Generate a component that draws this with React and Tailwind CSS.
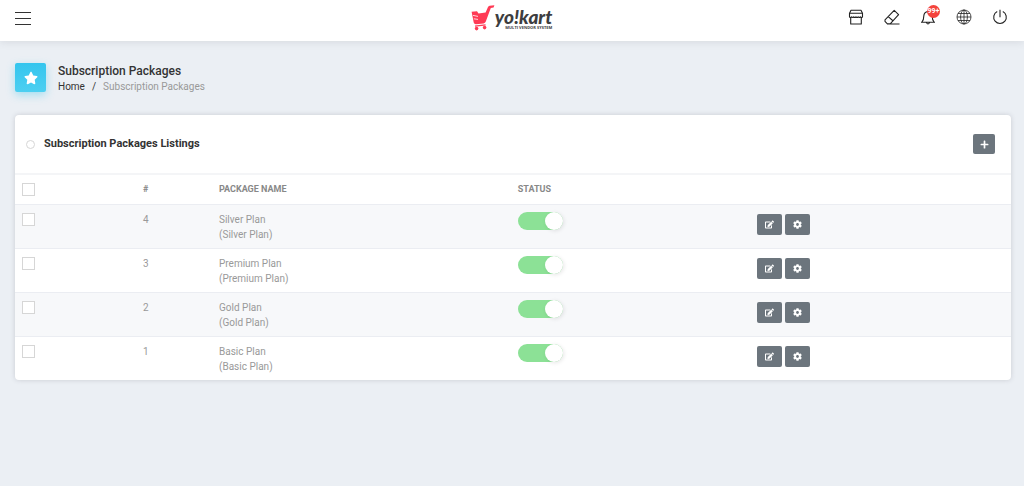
import React, { useState } from 'react';
import { FaCog, FaEdit, FaPlus, FaStar } from 'react-icons/fa';

const packages = [
  { id: 4, name: 'Silver Plan', active: true },
  { id: 3, name: 'Premium Plan', active: true },
  { id: 2, name: 'Gold Plan', active: true },
  { id: 1, name: 'Basic Plan', active: true },
];

const Icon = ({ children }) => (
  <svg viewBox="0 0 16 16" className="size-4" fill="none" stroke="currentColor" strokeWidth="1.1" strokeLinejoin="round">
    {children}
  </svg>
);

const Logo = () => (
  <a href="#" aria-label="yo!kart" className="flex items-start">
    <svg viewBox="0 0 24 26" className="h-[26px] w-6" fill="#ff3a55">
      <path d="M.6 6.8 L6 6.2 L7.5 8.6 L14.6 7.4 L17 2 Q17.5 .9 18.6 .7 L23.4 .2 L22.6 2.6 L19.8 3 L14.8 16.6 Q14.2 18.2 12.6 18.4 L5 19.3 Q3.2 19.4 2.7 17.6 Z" />
      <path d="M4 21.2 L14.6 19.9" stroke="#ff3a55" strokeWidth="1.2" />
      <circle cx="5.6" cy="23.6" r="1.8" />
      <circle cx="13.6" cy="22.6" r="1.8" />
      <path d="M2 10.4 L7 11.4 M2.8 13.8 L7 14.4" stroke="#fff" strokeWidth=".8" />
    </svg>
    <span className="flex flex-col items-end pt-[3px] text-[#3d3d3f]">
      <span className="font-[Lato,sans-serif] text-[19px] leading-[18px] font-black italic">yo!kart</span>
      <span className="font-['Open_Sans',sans-serif] text-[4px] leading-[4px] font-bold">MULTI VENDOR SYSTEM</span>
    </span>
  </a>
);

const TopBar = () => (
  <header className="relative grid grid-cols-3 items-start bg-white pt-[5px] pr-4 pb-[10px] pl-[15px] shadow-[0_1px_8px_rgba(69,65,78,0.12)]">
    <button type="button" aria-label="Menu" className="flex w-4 flex-col gap-[5px] pt-[7px]">
      <span className="h-px w-4 bg-[#333]" />
      <span className="h-px w-4 bg-[#333]" />
      <span className="h-px w-4 bg-[#333]" />
    </button>
    <div className="flex justify-center">
      <Logo />
    </div>
    <div className="flex justify-end gap-5 pt-1 text-[#222]">
      <button type="button" aria-label="Store">
        <Icon>
          <path d="M3 1.2h10l1.5 3v3.6q-1.1 1.4-2.2 0q-1.1 1.4-2.1 0q-1.1 1.4-2.2 0q-1.1 1.4-2.2 0q-1.1 1.4-2.1 0q-1.1 1.4-2.2 0V4.2zM2.7 8.8V15h10.6V8.8M1.5 4.2h13" />
        </Icon>
      </button>
      <button type="button" aria-label="Clear cache">
        <Icon>
          <path d="M1 10.8 10.2 1.3l4.4 4.3-8.4 9.2H3.4L1 12.4zM4.2 7.6l5 4.4M3 15h12.5" />
        </Icon>
      </button>
      <button type="button" aria-label="Notifications" className="relative">
        <Icon>
          <path d="M1 13.2h14M2 13q1.8-2 1.8-6Q4 3 8 2.5Q12 3 12.2 7q0 4 1.8 6M6.4 13.5q1.6 3 3.2 0" />
        </Icon>
        <span className="absolute -top-1 left-[7px] flex size-[13px] items-center justify-center rounded-full bg-[#f4433c] text-[7px] font-bold text-white">99+</span>
      </button>
      <button type="button" aria-label="Language">
        <Icon>
          <g strokeWidth=".8">
            <circle cx="8" cy="8" r="7" />
            <ellipse cx="8" cy="8" rx="3.4" ry="7" />
            <path d="M8 1v14M1 8h14M2 4.5h12M2 11.5h12" />
          </g>
        </Icon>
      </button>
      <button type="button" aria-label="Log out">
        <Icon>
          <path d="M5.2 2.6a6.3 6.3 0 1 0 5.6 0M8 .8v7.4" />
        </Icon>
      </button>
    </div>
  </header>
);

const CheckBox = ({ label }) => (
  <input type="checkbox" aria-label={label} className="block size-[13px] appearance-none border border-[#d6d6d6] bg-white checked:bg-[#8ce196]" />
);

const StatusSwitch = ({ label, defaultChecked }) => {
  const [on, setOn] = useState(defaultChecked);
  return (
    <input
      type="checkbox"
      role="switch"
      aria-label={label}
      checked={on}
      onChange={() => setOn(!on)}
      className="flex h-[18px] w-[45px] appearance-none rounded-full bg-[#d5d9de] before:size-[18px] before:rounded-full before:bg-white before:shadow-[1px_1px_4px_rgba(0,0,0,0.1)] checked:justify-end checked:bg-[#8ce196]"
    />
  );
};

const ActionButton = ({ label, children }) => (
  <button type="button" aria-label={label} className="flex h-[21px] w-[25px] items-center justify-center rounded-xs bg-[#6c757d] text-[9px] text-white">
    {children}
  </button>
);

const App = () => {
  return (
    <div className="min-h-screen bg-[#ebeff4] font-[Roboto,sans-serif]">
      <TopBar />

      <main className="pt-[22px] pr-[13px] pb-6 pl-[15px]">
        <div className="flex items-start gap-3">
          <div className="flex h-[29px] w-[31px] items-center justify-center rounded-xs bg-linear-to-b from-[#33c5ee] to-[#4ccff1] text-[14px] text-white shadow-[0_3px_8px_rgba(54,198,238,0.4)]">
            <FaStar />
          </div>
          <div>
            <h1 className="text-[12px] leading-4 font-medium text-[#333]">Subscription Packages</h1>
            <nav className="flex gap-[7px] text-[10px] leading-4 text-[#999]">
              <a href="#" className="text-[#333]">Home</a>
              <span className="text-[#333]">/</span>
              <span>Subscription Packages</span>
            </nav>
          </div>
        </div>

        <section className="mt-5 overflow-hidden rounded-sm bg-white shadow-[0_0_5px_rgba(69,65,78,0.2)]">
          <div className="flex h-[60px] items-center justify-between border-b-2 border-[#f4f5f7] pr-4 pl-[11px]">
            <div className="flex items-center gap-[9px]">
              <span className="size-[9px] rounded-full border border-[#d6d6d6]" />
              <h2 className="text-[11px] font-bold text-[#333]">Subscription Packages Listings</h2>
            </div>
            <button type="button" aria-label="Add package" className="flex h-5 w-[22px] items-center justify-center rounded-xs bg-[#6c757d] text-[9px] text-white">
              <FaPlus />
            </button>
          </div>

          <table className="w-full table-fixed text-left text-[10px] text-[#999]">
            <thead>
              <tr className="h-[29px] text-[9px] text-[#888]">
                <th className="w-[121px] px-[7px]"><CheckBox label="Select all" /></th>
                <th className="w-[76px] px-[7px] font-bold">#</th>
                <th className="w-[30%] px-[7px] font-bold">PACKAGE NAME</th>
                <th className="w-[24%] px-[7px] font-bold">STATUS</th>
                <td className="px-[7px]" />
              </tr>
            </thead>
            <tbody>
              {packages.map((pkg) => (
                <tr key={pkg.id} className="border-t border-[#ebedf2] align-top odd:bg-[#f7f8fa]">
                  <td className="px-[7px] pt-2"><CheckBox label={`Select ${pkg.name}`} /></td>
                  <td className="px-[7px] pt-[7px] leading-[15px]">{pkg.id}</td>
                  <td className="px-[7px] pt-[7px] pb-[6px] leading-[15px]">
                    {pkg.name}
                    <br />
                    ({pkg.name})
                  </td>
                  <td className="px-[7px] pt-[7px]"><StatusSwitch label={`${pkg.name} status`} defaultChecked={pkg.active} /></td>
                  <td className="px-[7px] pt-[9px]">
                    <div className="flex gap-[3px]">
                      <ActionButton label={`Edit ${pkg.name}`}><FaEdit /></ActionButton>
                      <ActionButton label={`${pkg.name} settings`}><FaCog /></ActionButton>
                    </div>
                  </td>
                </tr>
              ))}
            </tbody>
          </table>
        </section>
      </main>
    </div>
  );
};

export default App;
